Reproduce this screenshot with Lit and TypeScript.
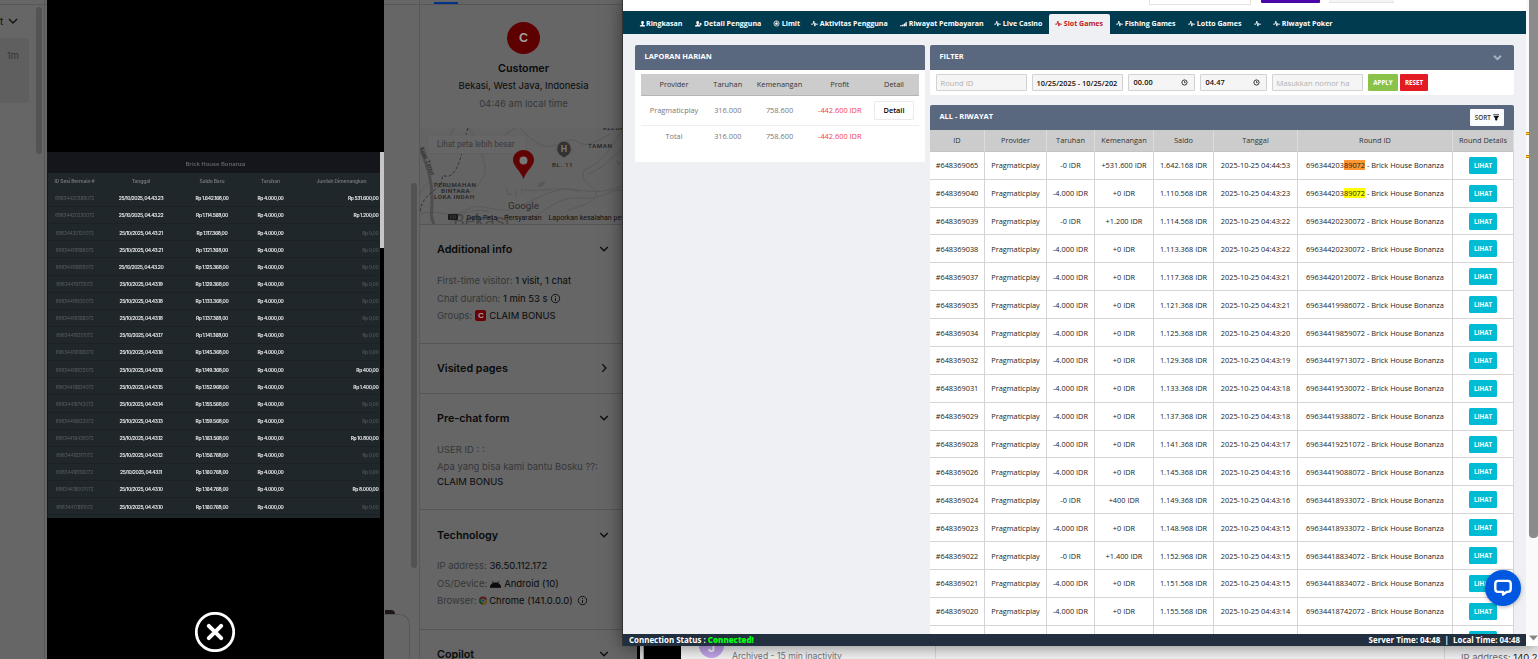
import { LitElement, html, css, svg, nothing } from "lit";
import { customElement } from "lit/decorators.js";
import { classMap } from "lit/directives/class-map.js";

/* ---------- data ---------- */

const sessions: [string, string, string, string][] = [
  ["69634420389072", "04.43.23", "1.642.168,00", "531.600,00"],
  ["69634420230072", "04.43.22", "1.114.568,00", "1.200,00"],
  ["69634420120072", "04.43.21", "1.117.368,00", ""],
  ["69634419986072", "04.43.21", "1.121.368,00", ""],
  ["69634419859072", "04.43.20", "1.125.368,00", ""],
  ["69634419713072", "04.43.19", "1.129.368,00", ""],
  ["69634419530072", "04.43.18", "1.133.368,00", ""],
  ["69634419388072", "04.43.18", "1.137.368,00", ""],
  ["69634419251072", "04.43.17", "1.141.368,00", ""],
  ["69634419088072", "04.43.16", "1.145.368,00", ""],
  ["69634418933072", "04.43.16", "1.149.368,00", "400,00"],
  ["69634418834072", "04.43.15", "1.152.968,00", "1.400,00"],
  ["69634418742072", "04.43.14", "1.155.568,00", ""],
  ["69634418622072", "04.43.13", "1.159.568,00", ""],
  ["69634418435072", "04.43.12", "1.163.568,00", "10.800,00"],
  ["69634418317072", "04.43.12", "1.156.768,00", ""],
  ["69634418158072", "04.43.11", "1.160.768,00", ""],
  ["69634418007072", "04.43.10", "1.164.768,00", "8.000,00"],
  ["69634417891072", "04.43.10", "1.160.768,00", ""],
];

interface Bet { id: string; bet: string; win: string; saldo: string; time: string; round: string; mark?: string; }
const bets: Bet[] = [
  { id: "648369065", bet: "-0", win: "+531.600", saldo: "1.642.168", time: "04:44:53", round: "69634420389072", mark: "active" },
  { id: "648369040", bet: "-4.000", win: "+0", saldo: "1.110.568", time: "04:43:23", round: "69634420389072", mark: "found" },
  { id: "648369039", bet: "-0", win: "+1.200", saldo: "1.114.568", time: "04:43:22", round: "69634420230072" },
  { id: "648369038", bet: "-4.000", win: "+0", saldo: "1.113.368", time: "04:43:22", round: "69634420230072" },
  { id: "648369037", bet: "-4.000", win: "+0", saldo: "1.117.368", time: "04:43:21", round: "69634420120072" },
  { id: "648369035", bet: "-4.000", win: "+0", saldo: "1.121.368", time: "04:43:21", round: "69634419986072" },
  { id: "648369034", bet: "-4.000", win: "+0", saldo: "1.125.368", time: "04:43:20", round: "69634419859072" },
  { id: "648369032", bet: "-4.000", win: "+0", saldo: "1.129.368", time: "04:43:19", round: "69634419713072" },
  { id: "648369031", bet: "-4.000", win: "+0", saldo: "1.133.368", time: "04:43:18", round: "69634419530072" },
  { id: "648369029", bet: "-4.000", win: "+0", saldo: "1.137.368", time: "04:43:18", round: "69634419388072" },
  { id: "648369028", bet: "-4.000", win: "+0", saldo: "1.141.368", time: "04:43:17", round: "69634419251072" },
  { id: "648369026", bet: "-4.000", win: "+0", saldo: "1.145.368", time: "04:43:16", round: "69634419088072" },
  { id: "648369024", bet: "-0", win: "+400", saldo: "1.149.368", time: "04:43:16", round: "69634418933072" },
  { id: "648369023", bet: "-4.000", win: "+0", saldo: "1.148.968", time: "04:43:15", round: "69634418933072" },
  { id: "648369022", bet: "-0", win: "+1.400", saldo: "1.152.968", time: "04:43:15", round: "69634418834072" },
  { id: "648369021", bet: "-4.000", win: "+0", saldo: "1.151.568", time: "04:43:15", round: "69634418834072" },
  { id: "648369020", bet: "-4.000", win: "+0", saldo: "1.155.568", time: "04:43:14", round: "69634418742072" },
  { id: "", bet: "", win: "", saldo: "", time: "", round: "" },
];

const tabs: { icon: string; label: string; width: number; active?: boolean }[] = [
  { icon: "user", label: "Ringkasan", width: 56 },
  { icon: "userplus", label: "Detail Pengguna", width: 78 },
  { icon: "ball", label: "Limit", width: 38 },
  { icon: "pulse", label: "Aktivitas Pengguna", width: 89 },
  { icon: "signal", label: "Riwayat Pembayaran", width: 94 },
  { icon: "pulse", label: "Live Casino", width: 61 },
  { icon: "pulse", label: "Slot Games", width: 61, active: true },
  { icon: "pulse", label: "Fishing Games", width: 72 },
  { icon: "pulse", label: "Lotto Games", width: 66 },
  { icon: "pulse", label: "", width: 19 },
  { icon: "pulse", label: "Riwayat Poker", width: 72 },
];

/* ---------- icons ---------- */

const glyphs: Record<string, unknown> = {
  user: svg`<path d="M4 1C5 1 5.600 1.700 5.600 2.800 5.600 3.700 5.200 4.300 4.700 4.700V5.300L7 6.200V7.300H1V6.200L3.300 5.300V4.700C2.800 4.300 2.400 3.700 2.400 2.800 2.400 1.700 3 1 4 1Z" fill="currentColor"/>`,
  userplus: svg`<path d="M3 1C4 1 4.600 1.700 4.600 2.800 4.600 3.700 4.300 4.300 3.800 4.700V5.300L6.200 6.200V7.300H0V6.200L2.200 5.300V4.700C1.700 4.300 1.400 3.700 1.400 2.800 1.400 1.700 2 1 3 1ZM5.800 3V4H4.900V5H5.800V6H6.800V5H7.800V4H6.800V3Z" fill="currentColor"/>`,
  ball: svg`<circle cx="4" cy="4" r="3" fill="none" stroke="currentColor" stroke-width=".8"/><path d="M4 2.600 5.400 3.600 4.900 5.200H3.100L2.600 3.600ZM4 1V2.400M1.200 3.200 2.400 3.500M6.800 3.200 5.600 3.500M2.200 6.400 3 5.400M5.800 6.400 5 5.400" fill="currentColor" stroke="currentColor" stroke-width=".5"/>`,
  pulse: svg`<path d="M.2 4.800H2.200L3.300 1.300 4.400 7 5.200 3.900 5.800 4.800H7.900" fill="none" stroke="currentColor" stroke-width="1"/>`,
  signal: svg`<path d="M0 7.200V6.300L1.800 5.800V7.200ZM2.200 7.200V5.600L4 4.800V7.200ZM4.400 7.200V4.500L5.700 3.700V7.200ZM6 7.200V3.200L7.700 2V7.200Z" fill="currentColor"/>`,
};
const icon = (n: string) => html`<svg class="ico" viewBox="0 0 8 8">${glyphs[n]}</svg>`;

/* ---------- zoomed transaction picture ---------- */

@customElement("history-lightbox")
class HistoryLightbox extends LitElement {
  static styles = css`
    :host { display: flex; flex-direction: column; background: #000; font: 600 5px Inter, sans-serif; }
    .shot { margin-top: 152px; height: 365.500px; display: flex; }
    .table { width: 333px; background: #20272b; border-left: 1px solid #16191c; box-sizing: border-box; letter-spacing: -.36px; filter: blur(.3px); overflow: hidden; }
    .title { height: 21px; background: #15161b; text-align: center; color: #656a70; font: 600 5.900px/25px "Open Sans", sans-serif; letter-spacing: 0; padding-left: 3px; }
    .row { display: grid; grid-template-columns: 53px 80px 62px 55px 1fr; height: 17.140px; align-items: center; text-align: center; color: #eceeef; white-space: nowrap; box-sizing: border-box; border-bottom: .5px solid #1b2125; padding-top: .7px; }
    .row > * { display: flex; justify-content: center; }
    .row :last-child { justify-content: flex-end; padding-right: 1.500px; }
    .head { color: #71767a; height: 16.900px; letter-spacing: -.12px; border: 0; padding: 0; }
    .head :last-child { padding-right: 13.500px; }
    .id { color: #555b5f; font-weight: 400; letter-spacing: -.3px; }
    .date { letter-spacing: -.43px; }
    .zero { color: #4b5155; }
    .thumb { width: 4px; height: 96px; background: #c6c6c6; }
    .close { margin: 94.500px 0 0 148px; width: 40px; height: 40px; }
  `;
  render() {
    return html`
      <div class="shot">
        <div class="table">
          <div class="title">Brick House Bonanza</div>
          <div class="row head"><span>ID Sesi Bermain #</span><span>Tanggal</span><span>Saldo Baru</span><span>Taruhan</span><span>Jumlah Dimenangkan</span></div>
          ${sessions.map(([id, t, s, w]) => html`<div class="row">
            <span class="id">${id}</span><span class="date">25/10/2025, ${t}</span><span>Rp ${s}</span><span>Rp 4.000,00</span>
            <span class=${classMap({ zero: !w })}>Rp ${w || "0,00"}</span></div>`)}
        </div>
        <div class="thumb"></div>
      </div>
      <svg class="close" viewBox="0 0 40 40"><circle cx="20" cy="20" r="18.700" fill="none" stroke="#fff" stroke-width="2.800"/><path d="M13.800 13.800 26.200 26.200M26.200 13.800 13.800 26.200" stroke="#fff" stroke-width="4" stroke-linecap="round"/></svg>
    `;
  }
}

/* ---------- visitor details ---------- */

@customElement("visitor-details")
class VisitorDetails extends LitElement {
  static styles = css`
    :host { display: block; background: #666; color: #090a0b; font: 400 9.480px Inter, sans-serif; overflow: hidden; border-left: 1px solid #585858; box-sizing: border-box; }
    .tabbar { height: 4px; border-bottom: 1px solid #565656; display: flex; align-items: flex-end; padding-left: 14px; }
    .tabbar i { width: 24px; height: 2px; background: #00348b; }
    .profile { height: 123px; box-sizing: border-box; padding-top: 17px; width: 207px; display: flex; flex-direction: column; align-items: center; line-height: 17.500px; }
    .avatar { width: 33px; height: 32px; border-radius: 50%; background: #5f0000; color: #a0a0a0; font: 700 12.500px/32px "Liberation Sans", sans-serif; text-align: center; margin-bottom: 5.500px; }
    .name { font-weight: 600; font-size: 10.750px; }
    .muted { color: #343639; }
    .map { display: block; width: 223px; height: 96px; }
    section { border-top: 1px solid #565656; box-sizing: border-box; padding: 1px 0 0 17px; width: 223px; line-height: 17.500px; white-space: nowrap; }
    .info { height: 119px; } .visited { height: 50px; } .form { height: 116px; line-height: 17px; } .tech { height: 120px; }
    h3 { margin: 0; height: 46px; box-sizing: border-box; padding-top: 1.500px; font-size: 10.750px; font-weight: 600; display: flex; align-items: center; justify-content: space-between; width: 171.500px; }
    .form h3 { padding-top: 0; }
    .tech h3 { padding-top: 3.500px; }
    h3 svg { width: 10px; height: 10px; position: relative; top: -.5px; }
    b { font-weight: 400; color: #090a0b; }
    .line { display: flex; align-items: center; gap: 3px; }
    .line .badge { width: 11px; height: 11px; border-radius: 2px; background: #6a0005; color: #a8a8a8; font: 700 8px/11px "Liberation Sans", sans-serif; text-align: center; }
    .line svg { width: 11px; height: 11px; }
    .line.tight { gap: 2px; }
    .line .chrome { width: 8px; height: 9px; margin-right: .5px; }
    .answer { display: block; line-height: 13px; }
  `;
  chevron(right = false) {
    return html`<svg viewBox="0 0 10 10"><path d=${right ? "M3.300 1.200 7 5 3.300 8.800" : "M1.200 3 5 6.800 8.800 3"} fill="none" stroke="#0c0d0e" stroke-width="1.300"/></svg>`;
  }
  info() {
    return html`<svg viewBox="0 0 11 11"><circle cx="5.500" cy="5.500" r="4.200" fill="none" stroke="#151617"/><path d="M5.500 5V8M5.500 3V4" stroke="#151617"/></svg>`;
  }
  map() {
    return html`<svg class="map" viewBox="0 0 223 96">
      <rect width="223" height="96" fill="#646464"/>
      <g fill="none" stroke="#595959" stroke-width="1">
        <path d="M0 27C20 18 28 11 34 0M48 0C56 8 60 17 62 27S70 42 58 57 36 60 20 56 4 60 0 66M62 27C72 20 84 5 96 0M100 0C112 12 120 20 132 18S150 8 158 14 176 14 190 6M164 42C182 36 194 14 203 2M168 46C190 38 192 22 223 12M164 42C158 56 180 60 176 68S160 78 148 82M0 86C18 80 28 92 46 82S76 88 96 80 120 66 140 62 170 70 203 58M104 62C126 64 140 57 160 64M110 92C126 82 140 68 160 70 184 72 184 62 203 62M87 60V66H92M96 68V62M102 66V60M30 96C36 84 60 80 70 84"/>
        <path d="M120 55q6-3 4 1t-6 2zM196 33q4 0 3 4" fill="#595959"/>
      </g>
      <path d="M0 20C8 40 12 52 12 70S10 88 14 96" fill="none" stroke="#4e4e4e" stroke-width="3"/>
      <path d="M48 0C42 18 42 34 34 44S22 42 22 52 2 64 0 84" fill="none" stroke="#343434" stroke-width="1" stroke-dasharray="3 2"/>
      <g font-family="Roboto,sans-serif" fill="#222">
        <text x="33" y="99" font-size="19" fill="#484848">Bekasi</text>
        <text x="14" y="58.500" font-size="6.200" font-weight="500" letter-spacing=".5">PERUMAHAN</text>
        <text x="21" y="64.500" font-size="6.200" font-weight="500" letter-spacing=".5">BINTARA</text>
        <text x="14" y="70.500" font-size="6.200" font-weight="500" letter-spacing=".5">LOKA INDAH</text>
        <text x="168" y="20" font-size="6.200" font-weight="500" letter-spacing=".6">TAMAN</text>
        <text x="132" y="39" font-size="6.200" font-weight="500" letter-spacing=".6">BL. 11</text>
        <text x="183" y="1.500" font-size="6.200" font-weight="500" letter-spacing=".6">KELURAHAN</text>
        <text transform="translate(0 20) rotate(68)" font-size="6.200">Kuer Timur</text>
        <text x="88" y="80.500" font-size="9.800" fill="#2c2c2c" stroke="#666" stroke-width=".6" paint-order="stroke">Google</text>
      </g>
      <rect x="7" y="7" width="99" height="18.500" rx="1" fill="#666" stroke="#5e5e5e" stroke-width=".7"/>
      <g font-family="Roboto,sans-serif">
        <text x="17" y="19" font-size="8.130" fill="#3a3a3a">Lihat peta lebih besar</text>
        <g font-size="7.080" fill="#101010"><text x="46.500" y="92">Data Peta</text><text x="84" y="92">Persyaratan</text><text x="128.500" y="92">Laporkan kesalahan peta</text></g>
      </g>
      <rect x="28" y="86" width="10" height="6" rx="1" fill="#1a1a1a"/><path d="M30 88H36.500M30 90H36.500" stroke="#5a5a5a" stroke-dasharray="1 .7" stroke-width=".8"/>
      <path d="M144 13a8 8 0 0 1 5 13.500L144 30 139 26.500A8 8 0 0 1 144 13Z" fill="#333" stroke="#606060"/>
      <text x="144" y="24" font-size="9" font-weight="700" font-family="Roboto,sans-serif" fill="#777" text-anchor="middle">H</text>
      <path d="M103.500 22C109.500 22 114 26.500 114 32 114 38 107 42 103.500 51 100 42 93 38 93 32 93 26.500 97.500 22 103.500 22Z" fill="#620303"/><circle cx="103.500" cy="32.500" r="4" fill="#777"/>
    </svg>`;
  }
  render() {
    return html`
      <div class="tabbar"><i></i></div>
      <div class="profile"><div class="avatar">C</div><div class="name">Customer</div><div>Bekasi, West Java, Indonesia</div><div class="muted">04:46 am local time</div></div>
      ${this.map()}
      <section class="info"><h3>Additional info${this.chevron()}</h3>
        <div class="muted">First-time visitor: <b>1 visit, 1 chat</b></div>
        <div class="muted line tight"><span>Chat duration: <b>1 min 53 s</b></span>${this.info()}</div>
        <div class="muted line"><span>Groups:</span><span class="badge">C</span><b>CLAIM BONUS</b></div></section>
      <section class="visited"><h3>Visited pages${this.chevron(true)}</h3></section>
      <section class="form"><h3>Pre-chat form${this.chevron()}</h3>
        <div class="muted">USER ID : :</div><div class="muted">Apa yang bisa kami bantu Bosku ??:</div><b class="answer">CLAIM BONUS</b></section>
      <section class="tech"><h3>Technology${this.chevron()}</h3>
        <div class="muted">IP address: <b>36.50.112.172</b></div>
        <div class="muted line"><span>OS/Device:</span><svg viewBox="0 0 11 11"><path d="M0 9.500C.3 6.500 2.500 4.800 5.500 4.800S10.700 6.500 11 9.500ZM2 3 3.500 5.500M9 3 7.500 5.500" fill="#0c0c0c" stroke="#0c0c0c" stroke-width=".7"/></svg><b>Android (10)</b></div>
        <div class="muted line tight"><span>Browser:</span><svg class="chrome" viewBox="0.400 1 8.200 9"><circle cx="4.500" cy="5.500" r="4" fill="#5c1712"/><path d="M4.500 5.500 1 3.500A4 4 0 0 0 4.100 9.500Z" fill="#154a22"/><path d="M4.500 5.500 8.500 4.500A4 4 0 0 1 4.100 9.500Z" fill="#6b5410"/><circle cx="4.500" cy="5.500" r="1.800" fill="#1c3d70" stroke="#777" stroke-width=".6"/></svg><b>Chrome (141.0.0.0)</b><span></span>${this.info()}</div></section>
      <section><h3>Copilot${this.chevron()}</h3></section>
    `;
  }
}

/* ---------- admin window ---------- */

@customElement("admin-window")
class AdminWindow extends LitElement {
  static styles = css`
    :host { display: flex; flex-direction: column; background: #fff; font: 400 7.370px "Open Sans", sans-serif; color: #222; box-shadow: -1px 0 0 #333, 0 0 18px rgba(0,0,0,.55); }
    * { box-sizing: border-box; }
    .upper { flex: 1; min-height: 0; display: flex; }
    .page { width: 903px; overflow: hidden; background: #eff0f3; }
    .top { height: 11px; background: #fff; display: flex; align-items: flex-start; padding-left: 526px; }
    .top i:nth-child(1) { width: 102px; height: 5px; border: 1px solid #e3e4e8; border-top: 0; }
    .top i:nth-child(2) { width: 59px; height: 3px; background: #4c05a8; margin-left: 10px; border-radius: 0 0 1px 1px; }
    .top i:nth-child(3) { width: 65px; height: 3px; background: #f3f4f6; border-bottom: 1px solid #e2e3e5; margin-left: 9px; }
    nav { height: 23px; background: #003b4f; display: flex; padding: 3px 0 0 10px; color: #fff; font: 700 7.050px/18px "Open Sans", sans-serif; }
    nav div { display: flex; align-items: center; padding: 0 0 2px 6px; white-space: nowrap; border-radius: 2px 2px 0 0; flex: none; }
    nav .on { background: #eff0f3; color: #c11820; }
    .ico { width: 7px; height: 7px; margin: 1px 1.800px 0 0; flex: none; }
    nav div:first-child .ico { margin-right: 0; }
    .cols { display: flex; align-items: flex-start; padding: 11px 12px 0; gap: 5px; }
    .left { width: 290px; }
    .right { width: 584px; display: flex; flex-direction: column; gap: 10px; }
    .card { background: #fff; border-radius: 2px; }
    .bar { height: 25px; background: #59687f; color: #fff; border-radius: 2px 2px 0 0; font: 700 7.430px/23px "Open Sans", sans-serif; padding: 0 10px 2px 9.500px; display: flex; justify-content: space-between; align-items: center; }
    .daily { height: 92px; padding: 4px 6px; }
    .d { display: grid; grid-template-columns: 66px 41.500px 62px 58.500px 50px; align-items: center; text-align: center; color: #777; }
    .d.h { height: 22px; background: #ccc; color: #333; border-bottom: 1px solid #b5b5b5; padding-bottom: 1px; }
    .d.one { height: 29.500px; border-bottom: 1px solid #eee; }
    .d.two { height: 21px; }
    .neg { color: #f5424e; }
    .btn { justify-self: end; width: 40px; height: 19px; border: 1px solid #eaeaea; border-radius: 1px; line-height: 17px; color: #000; font-weight: 600; margin-right: 5px; }
    .filter { height: 25px; padding: 4px 6px; display: flex; }
    .in { width: 91px; height: 17px; margin-right: 5px; border: 1px solid #d2d2d2; background: #f5f5f5; line-height: 17px; padding: 1px 3.500px 0; overflow: hidden; white-space: nowrap; color: #111; font-weight: 600; border-radius: 1px; display: flex; justify-content: space-between; align-items: center; }
    .in.ph { color: #b0b0b0; font-weight: 400; font-size: 7.600px; }
    .in.t { width: 67px; padding: 0 6px 0 4.500px; line-height: 15px; letter-spacing: .1px; }
    .in svg { width: 7px; height: 7px; }
    .act { height: 17px; width: 30px; background: #8bc34a; color: #fff; font: 700 6.220px/17px "Open Sans", sans-serif; text-align: center; border-radius: 1px; margin-right: 2px; }
    .act.red { width: 28px; background: #e31b23; }
    .sort { width: 34px; height: 17px; background: #fafbfc; color: #333; border-radius: 1px; font: 600 6.300px/17px "Open Sans", sans-serif; display: flex; align-items: center; justify-content: center; gap: 2px; position: relative; top: 1px; }
    .bar .sort svg { width: 6.500px; height: 6.500px; margin: 0; }
    .bar svg { width: 9px; height: 9px; margin: 2px 2.500px 0 0; }
    .g { display: grid; grid-template-columns: 55px 62px 48px 59px 60px 84px 155px 61px; height: 27.880px; }
    .g > * { display: flex; align-items: center; justify-content: center; white-space: pre; border-right: 1px solid #d5d5d5; border-bottom: 1px solid #d5d5d5; padding-top: .1px; }
    .g.h { height: 21.800px; background: #ccc; color: #333; }
    .g.h > * { border-right-color: #ddd; border-bottom-color: #c4c4c4; padding: 0 0 .5px; }
    mark { background: #ff9632; color: inherit; padding: 0; }
    mark.found { background: #ff0; }
    .see { width: 28px; height: 17px; background: #00bbd4; color: #fff; border-radius: 1.500px; font: 700 6.140px/17px "Open Sans", sans-serif; text-align: center; }
    .foot { height: 12px; width: 903px; background: #212f3e; color: #fff; display: flex; justify-content: space-between; padding: 0 6px; font: 700 7.950px/12px "Open Sans", sans-serif; white-space: pre; }
    .foot b { color: #0f1; }
    .gut { width: 3px; background: #fafafa; padding-top: 132px; display: flex; flex-direction: column; gap: 20px; }
    .gut i { height: 3px; background: #ffdf2e; border: solid #c67a10; border-width: 1px 0; }
    .track { width: 9px; background: #fafafa; }
    .track i { display: block; height: 538px; background: #8b8b8b; border-radius: 0 0 4px 4px; }
    .end { display: flex; height: 12px; }
    .end svg { width: 12px; height: 12px; }
    .chat { position: absolute; left: 862px; top: 570px; width: 36px; height: 36px; border-radius: 50%; background: #0058e0; box-shadow: 0 1px 4px rgba(0,0,0,.3); display: flex; align-items: center; justify-content: center; }
    .chat svg { width: 22px; height: 22px; }
  `;
  clock() {
    return html`<svg viewBox="0 0 7 7"><circle cx="3.500" cy="3.500" r="2.600" fill="none" stroke="#222" stroke-width=".9"/><path d="M3.500 2V3.700H4.700" fill="none" stroke="#222" stroke-width=".8"/></svg>`;
  }
  bet(b: Bet) {
    const idr = (v: string) => (v ? `${v} IDR` : "");
    const round = b.mark
      ? html`<span>${b.round.slice(0, 9)}<mark class=${b.mark}>${b.round.slice(9)}</mark> - Brick House Bonanza</span>`
      : b.id ? html`<span>${b.round} - Brick House Bonanza</span>` : nothing;
    return html`<div class="g"><div>${b.id ? "#" + b.id : ""}</div><div>${b.id ? "Pragmaticplay" : ""}</div><div>${idr(b.bet)}</div><div>${idr(b.win)}</div><div>${idr(b.saldo)}</div><div>${b.time ? "2025-10-25 " + b.time : ""}</div><div>${round}</div><div><span class="see">LIHAT</span></div></div>`;
  }
  render() {
    return html`
      <div class="upper">
        <div class="page">
          <div class="top"><i></i><i></i><i></i></div>
          <nav>${tabs.map((t) => html`<div class=${classMap({ on: !!t.active })} style="width:${t.width}px">${icon(t.icon)}${t.label}</div>`)}</nav>
          <div class="cols">
            <div class="card left">
              <div class="bar">LAPORAN HARIAN</div>
              <div class="daily">
                <div class="d h"><span>Provider</span><span>Taruhan</span><span>Kemenangan</span><span>Profit</span><span>Detail</span></div>
                <div class="d one"><span>Pragmaticplay</span><span>316.000</span><span>758.600</span><span class="neg">-442.600 IDR</span><span class="btn">Detail</span></div>
                <div class="d two"><span>Total</span><span>316.000</span><span>758.600</span><span class="neg">-442.600 IDR</span></div>
              </div>
            </div>
            <div class="right">
              <div class="card">
                <div class="bar">FILTER<svg viewBox="0 0 9 9"><path d="M1 2.800 4.500 6.200 8 2.800" fill="none" stroke="#a9b3c2" stroke-width="2"/></svg></div>
                <div class="filter">
                  <div class="in ph">Round ID</div><div class="in">10/25/2025 - 10/25/202</div>
                  <div class="in t">00.00${this.clock()}</div><div class="in t">04.47${this.clock()}</div>
                  <div class="in ph">Masukkan nomor ha</div><div class="act">APPLY</div><div class="act red">RESET</div>
                </div>
              </div>
              <div class="card">
                <div class="bar">ALL - RIWAYAT<span class="sort">SORT<svg viewBox="0 0 7 7"><path d="M.300.900H6.700M1 2.700H6L4.200 4.300V6.500H2.800V4.300Z" fill="#000" stroke="#000" stroke-width=".9"/></svg></span></div>
                <div class="g h"><div>ID</div><div>Provider</div><div>Taruhan</div><div>Kemenangan</div><div>Saldo</div><div>Tanggal</div><div>Round ID</div><div>Round Details</div></div>
                ${bets.map((b) => this.bet(b))}
              </div>
            </div>
          </div>
        </div>
        <div class="gut"><i></i><i></i></div>
        <div class="track"><i></i></div>
      </div>
      <div class="end">
        <div class="foot"><span>Connection Status : <b>Connected!</b></span><span>Server Time: 04:48  |  Local Time: 04:48</span></div>
        <svg viewBox="0 0 12 12"><path d="M3 1.500H12L7.500 6.500Z" fill="#858585"/></svg>
      </div>
      <div class="chat"><svg viewBox="0 0 20 20"><path d="M5.500 3.500H14.500Q17 3.500 17 6V11Q17 13.500 14.500 13.500H13.500L10 16V13.500H5.500Q3 13.500 3 11V6Q3 3.500 5.500 3.500Z" fill="none" stroke="#fff" stroke-width="2.200" stroke-linejoin="round"/></svg></div>
    `;
  }
}

/* ---------- desktop ---------- */

@customElement("app-root")
class AppRoot extends LitElement {
  static styles = css`
    :host { display: block; position: relative; width: 1538px; height: 659px; overflow: hidden; background: #f7f7f8; font-family: Inter, sans-serif; }
    * { box-sizing: border-box; }
    .back { display: flex; height: 659px; }
    .back > * { flex: none; }
    .list { width: 45px; background: #666; border-right: 1px solid #585858; display: flex; box-shadow: inset 0 4px #666, inset 0 5px #585858; }
    .left { width: 36px; border-top: 1px solid transparent; }
    .sort { display: flex; align-items: center; gap: 5px; margin-top: 12px; font-size: 10px; line-height: 16px; color: #111; }
    .sort svg { width: 10px; height: 8px; }
    .item { width: 29px; height: 65px; margin-top: 9px; background: #5f5f5f; border-radius: 0 4px 4px 0; padding: 11px 0 0 7px; font-size: 9.200px; line-height: 14px; color: #333; }
    .scroll { width: 6px; height: 147px; margin-top: 7px; border-radius: 3px; background: #535353; flex: none; }
    .dim { width: 374px; background: #666; display: flex; flex-direction: column; align-items: flex-end; box-shadow: inset 0 4px #666, inset 0 5px #585858; }
    .dim .scroll { height: 385px; margin: 183px 2px 0 0; }
    .face { width: 10px; height: 4px; background: #1d1817; border-radius: 0 8px 0 0; margin: 42px 24px 0 0; flex: none; }
    .compose { width: 30px; flex: 1; border: 1px solid #575757; border-left: 0; border-bottom: 0; border-radius: 0 10px 0 0; margin-right: 9px; }
    visitor-details { width: 218px; }
    .back .behind { flex: 1; min-width: 0; display: flex; align-items: flex-end; height: 659px; }
    .behind > * { height: 14px; flex: none; }
    .blackline { width: 3px; background: #000; }
    .grey { width: 4px; background: #d8d8d8; border-right: 1px solid #999; }
    .photo { width: 37px; background: #000; }
    .arch { width: 255px; border-right: 1px solid #dcdcdc; padding-left: 18px; display: flex; gap: 8px; color: #77797d; font-size: 8.630px; }
    .arch span { line-height: 22px; white-space: nowrap; }
    .arch .j { width: 25px; height: 25px; margin-top: -12px; border-radius: 50%; background: #c4a7ee; color: #fff; text-align: center; font: 700 12px/29px Inter, sans-serif; flex: none; }
    .mid { width: 509px; border-right: 1px solid #dcdcdc; }
    .behind .ip { padding-left: 16px; font-size: 9.450px; line-height: 26px; color: #6b6d70; white-space: nowrap; overflow: hidden; flex: 1; }
    .ip b { font-weight: 400; color: #222; }
    history-lightbox { position: absolute; left: 47px; top: 0; width: 337px; height: 659px; }
    admin-window { position: absolute; left: 623px; top: 0; width: 915px; height: 646px; }
  `;
  render() {
    return html`
      <div class="back">
        <div class="list"><div class="left">
          <div class="sort">t<svg viewBox="0 0 10 8"><path d="M1 2 5 6 9 2" fill="none" stroke="#111" stroke-width="1.400"/></svg></div>
          <div class="item">1m</div></div><div class="scroll"></div></div>
        <div class="dim"><div class="scroll"></div><div class="face"></div><div class="compose"></div></div>
        <visitor-details></visitor-details>
        <div class="behind"><div class="blackline"></div><div class="grey"></div><div class="photo"></div>
          <div class="arch"><div class="j">J</div><span>Archived - 15 min inactivity</span></div>
          <div class="mid"></div><div class="ip">IP address: <b>140.2</b></div></div>
      </div>
      <history-lightbox></history-lightbox>
      <admin-window></admin-window>
    `;
  }
}
